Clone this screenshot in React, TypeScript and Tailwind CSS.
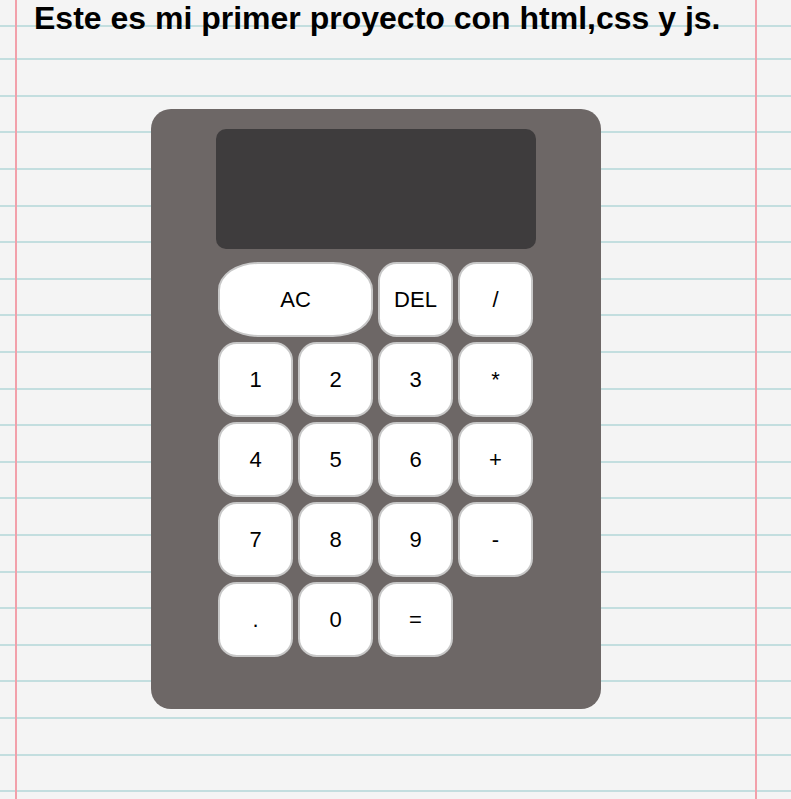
const keys: { label: string; wide?: boolean }[] = [
  { label: "AC", wide: true },
  { label: "DEL" },
  { label: "/" },
  { label: "1" },
  { label: "2" },
  { label: "3" },
  { label: "*" },
  { label: "4" },
  { label: "5" },
  { label: "6" },
  { label: "+" },
  { label: "7" },
  { label: "8" },
  { label: "9" },
  { label: "-" },
  { label: "." },
  { label: "0" },
  { label: "=" },
];

/* ========================================================= */

function Key({ label, wide }: { label: string; wide?: boolean }) {
  return (
    <button
      type="button"
      className={
        wide
          ? "col-span-2 h-[75px] rounded-[40px/28px] border-2 border-[#c8c8c8] bg-white text-[22px] text-black"
          : "h-[75px] rounded-[25%] border-2 border-[#c8c8c8] bg-white text-[22px] text-black"
      }
    >
      {label}
    </button>
  );
}

/* ========================================================= */

export default function App() {
  return (
    <div className="min-h-screen w-full bg-[#f4f4f4] font-['Liberation_Sans',Arial,sans-serif] [background-image:linear-gradient(to_right,transparent_15px,#f2a0aa_15px,#f2a0aa_17px,transparent_17px,transparent_755px,#f2a0aa_755px,#f2a0aa_757px,transparent_757px),linear-gradient(#c3dedf,#c3dedf),repeating-linear-gradient(to_bottom,transparent_0px,transparent_18.3px,#c3dedf_18.3px,#c3dedf_20.3px,transparent_20.3px,transparent_36.6px)] [background-size:100%_100%,100%_2px,100%_calc(100%_-_40px)] [background-position:0_0,0_24.7px,0_40px] [background-repeat:no-repeat]">

      {/* HEADER */}
      <h1 className="pl-[34px] text-[32px] font-bold leading-[37px] text-black">
        Este es mi primer proyecto con html,css y js.
      </h1>

      {/* CALCULATOR */}
      <div className="ml-[151px] mt-[72px] flex h-[600px] w-[450px] flex-col rounded-[20px] bg-[#6d6766] pt-5">

        <div className="ml-[65px] h-[120px] w-[320px] rounded-[10px] bg-[#3e3c3d]" />

        <div className="ml-[67px] mt-[13px] grid grid-cols-[repeat(4,75px)] gap-[5px]">
          {keys.map((k) => (
            <Key key={k.label} label={k.label} wide={k.wide} />
          ))}
        </div>

      </div>

    </div>
  );
}
